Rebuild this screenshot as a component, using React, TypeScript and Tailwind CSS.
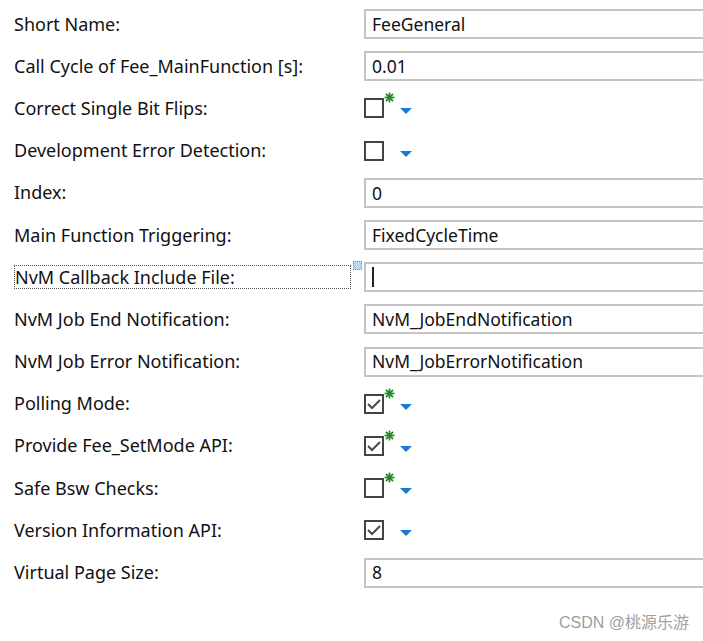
import React from "react";

type Row =
  | { label: string; kind: "text"; value: string; focus?: boolean }
  | { label: string; kind: "check"; checked: boolean; star: boolean };

const rows: Row[] = [
  { label: "Short Name:", kind: "text", value: "FeeGeneral" },
  { label: "Call Cycle of Fee_MainFunction [s]:", kind: "text", value: "0.01" },
  { label: "Correct Single Bit Flips:", kind: "check", checked: false, star: true },
  { label: "Development Error Detection:", kind: "check", checked: false, star: false },
  { label: "Index:", kind: "text", value: "0" },
  { label: "Main Function Triggering:", kind: "text", value: "FixedCycleTime" },
  { label: "NvM Callback Include File:", kind: "text", value: "", focus: true },
  { label: "NvM Job End Notification:", kind: "text", value: "NvM_JobEndNotification" },
  { label: "NvM Job Error Notification:", kind: "text", value: "NvM_JobErrorNotification" },
  { label: "Polling Mode:", kind: "check", checked: true, star: true },
  { label: "Provide Fee_SetMode API:", kind: "check", checked: true, star: true },
  { label: "Safe Bsw Checks:", kind: "check", checked: false, star: true },
  { label: "Version Information API:", kind: "check", checked: true, star: false },
  { label: "Virtual Page Size:", kind: "text", value: "8" },
];

function CheckField({ checked, star }: { checked: boolean; star: boolean }) {
  return (
    <div className="relative flex items-center h-[30px]">
      <svg width="20" height="20" viewBox="0 0 20 20" className="block">
        <rect x="1" y="1" width="18" height="18" fill="#fff" stroke="#444" strokeWidth="2" />
        {checked && (
          <path d="M4 10 L8 14 L16 6" fill="none" stroke="#4a4a4a" strokeWidth="2" />
        )}
      </svg>
      {star && (
        <svg width="11" height="11" viewBox="0 0 10 10" className="absolute left-[20px] top-[-1px]">
          <g stroke="#1e8a1e" strokeWidth="1.6">
            <line x1="5" y1="0.5" x2="5" y2="9.5" />
            <line x1="0.5" y1="5" x2="9.5" y2="5" />
            <line x1="1.8" y1="1.8" x2="8.2" y2="8.2" />
            <line x1="8.2" y1="1.8" x2="1.8" y2="8.2" />
          </g>
        </svg>
      )}
      <svg width="12" height="6" viewBox="0 0 12 6" className="ml-[16px] mt-[6px]">
        <path d="M0 0 H12 L6 6 Z" fill="#1a78d6" />
      </svg>
    </div>
  );
}

function TextField({ value, focus }: { value: string; focus?: boolean }) {
  return (
    <div className="relative flex items-center h-[30px] w-[400px] shrink-0 border-[2px] border-[#c4c4c4] bg-white pl-[6px] text-[17.5px] text-[#111]">
      {focus && <div className="w-[2px] h-[20px] bg-[#222]" />}
      {value}
    </div>
  );
}

export default function App() {
  return (
    <div
      className="w-[703px] h-[641px] overflow-hidden bg-white relative"
      style={{ fontFamily: '"Noto Sans", "Open Sans", sans-serif' }}
    >
      <div className="flex flex-col pt-[3px]">
        {rows.map((r) => (
          <div key={r.label} className="flex items-center h-[42.2px]">
            <div className="w-[364px] shrink-0 pl-[14px] pr-[12px] relative">
              {r.kind === "text" && r.focus ? (
                <div className="relative">
                  <span className="block border border-dotted border-[#555] w-[337px] text-[18px] text-[#111] leading-[22px]">
                    {r.label}
                  </span>
                  <div className="absolute right-[-10px] top-[-4px] w-[9px] h-[9px] border border-dotted border-[#4a90e2] bg-[#bcd6f5]" />
                </div>
              ) : (
                <span className="text-[18px] text-[#111]">{r.label}</span>
              )}
            </div>
            {r.kind === "text" ? (
              <TextField value={r.value} focus={r.focus} />
            ) : (
              <CheckField checked={r.checked} star={r.star} />
            )}
          </div>
        ))}
      </div>
      <div
        className="absolute right-[14px] bottom-[6px] text-[16px] text-[#a0a0a0]"
        style={{ fontFamily: '"Liberation Sans", "Noto Sans CJK SC", sans-serif' }}
      >
        CSDN @桃源乐游
      </div>
    </div>
  );
}
